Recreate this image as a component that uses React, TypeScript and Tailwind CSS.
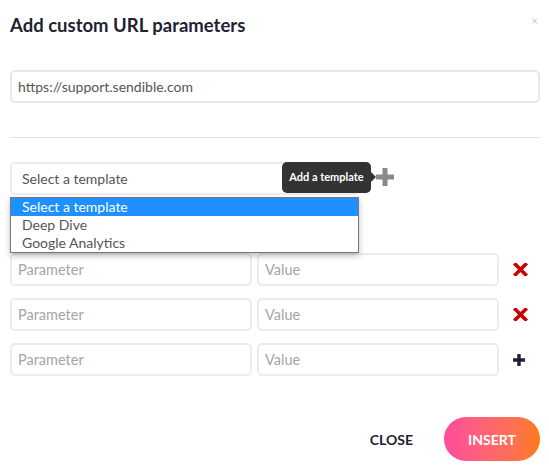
import React from 'react';

const rows = [
  { action: 'remove' },
  { action: 'remove' },
  { action: 'add' },
];

function RemoveIcon() {
  return (
    <svg width="15" height="13" viewBox="0 0 15 13" aria-hidden>
      <path d="M2.5 1.5 L12.5 11.5 M12.5 1.5 L2.5 11.5" stroke="#cc0000" strokeWidth="3.6" strokeLinecap="square" />
    </svg>
  );
}

function AddIcon({ color, size, stroke }: { color: string; size: number; stroke: number }) {
  const h = size / 2;
  return (
    <svg width={size} height={size} viewBox={`0 0 ${size} ${size}`} aria-hidden>
      <path d={`M${h} 0 V${size} M0 ${h} H${size}`} stroke={color} strokeWidth={stroke} />
    </svg>
  );
}

export default function App() {
  return (
    <div className="relative w-[549px] h-[466px] bg-white overflow-hidden font-['Lato','Liberation_Sans',sans-serif] text-[#1f2233]">
      {/* Header */}
      <div className="pl-[10px] pr-[9px] pt-[11px]">
        <h1 className="text-[18.5px] leading-[28px] font-bold">Add custom URL parameters</h1>
        <button className="absolute right-[11px] top-[15px] text-[11px] leading-none text-[#c8c8c8]">×</button>

        {/* URL */}
        <div className="mt-[31px] h-[33px] rounded-[5px] border-2 border-[#e8e8e8] flex items-center px-[6px] text-[14px] text-[#555]">
          https://support.sendible.com
        </div>

        <div className="mt-[34px] border-t border-[#e3e3e3]" />

        {/* Template select */}
        <div className="relative mt-[24px] flex items-center">
          <div className="w-[348px] h-[33px] rounded-[5px] border-2 border-[#ececec] flex items-center px-[10px] text-[14px] text-[#555]">
            Select a template
          </div>
          <div className="absolute left-[272px] top-0 h-[31px] w-[89px] rounded-[5px] bg-[#333] text-white text-[11px] font-bold flex items-center justify-center">
            Add a template
            <span className="absolute right-[-5px] top-[10px] w-0 h-0 border-y-[5px] border-y-transparent border-l-[5px] border-l-[#333]" />
          </div>
          <div className="ml-[18px] mt-[-3px]">
            <AddIcon color="#8a8a8a" size={18} stroke={5} />
          </div>

          {/* Open dropdown */}
          <ul className="absolute left-0 top-[35px] z-10 w-[349px] border border-[#777] bg-white shadow-[0_3px_6px_rgba(0,0,0,0.25)] text-[14px] leading-[18px] text-[#555]">
            <li className="bg-[#1e90ff] text-white px-[11px]">Select a template</li>
            <li className="px-[11px]">Deep Dive</li>
            <li className="px-[11px]">Google Analytics</li>
          </ul>
        </div>

        {/* Parameters */}
        <div className="mt-[58px] flex flex-col gap-[12px]">
          {rows.map((r, i) => (
            <div key={i} className="flex items-center">
              <div className="w-[242px] h-[33px] rounded-[5px] border-2 border-[#ececec] flex items-center px-[6px] text-[14.5px] text-[#a5a5a5]">
                Parameter
              </div>
              <div className="ml-[5px] w-[242px] h-[33px] rounded-[5px] border-2 border-[#ececec] flex items-center px-[6px] text-[14.5px] text-[#a5a5a5]">
                Value
              </div>
              <div className="ml-[14px] flex items-center">
                {r.action === 'remove' ? <RemoveIcon /> : <AddIcon color="#1f2233" size={12} stroke={3.4} />}
              </div>
            </div>
          ))}
        </div>

        {/* Footer */}
        <div className="mt-[41px] flex items-center justify-end gap-[31px]">
          <button className="text-[14px] font-bold text-[#1f2233]">CLOSE</button>
          <button className="w-[96px] h-[44px] rounded-full bg-gradient-to-r from-[#ff4a9c] to-[#ff7a0e] text-white text-[14px] font-bold">
            INSERT
          </button>
        </div>
      </div>
    </div>
  );
}
